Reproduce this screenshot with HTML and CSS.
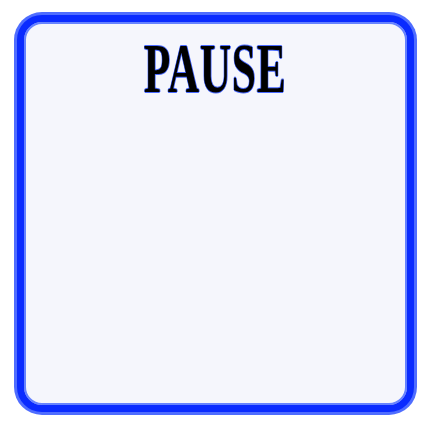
FILE: index.html
```html
<!DOCTYPE html>
<html>
<head>
<meta charset="utf-8">
<link rel="stylesheet" href="styles.css">
</head>
<body>
<div class="panel">
  <h1 class="title"><span class="title-text">PAUSE</span></h1>
</div>
</body>
</html>
```
FILE: styles.css
```css
html, body {
  margin: 0;
  padding: 0;
  background: #ffffff;
}
body {
  width: 432px;
  height: 428px;
  overflow: hidden;
}
.panel {
  box-sizing: border-box;
  width: 397px;
  height: 397px;
  margin: 15px 0 0 17px;
  border: 7px solid #0a2bff;
  border-radius: 25px;
  box-shadow: 0 0 0 3px #4f6dff, inset 0 0 0 2px #6683ff;
  background: #f5f6fc;
  display: flex;
  flex-direction: column;
  align-items: center;
}
.title {
  margin: 0;
  padding-top: 16px;
  font-family: "Liberation Serif", "Times New Roman", serif;
  font-weight: bold;
  font-size: 69px;
  line-height: 62px;
  color: #000000;
}
.title-text {
  display: inline-block;
  transform: scaleX(0.63);
  letter-spacing: 1px;
  text-shadow: 1px 0 0 #4a6aff, -1px 0 0 #4a6aff, 0 1px 0 #4a6aff, 0 -1px 0 #4a6aff;
}
```
